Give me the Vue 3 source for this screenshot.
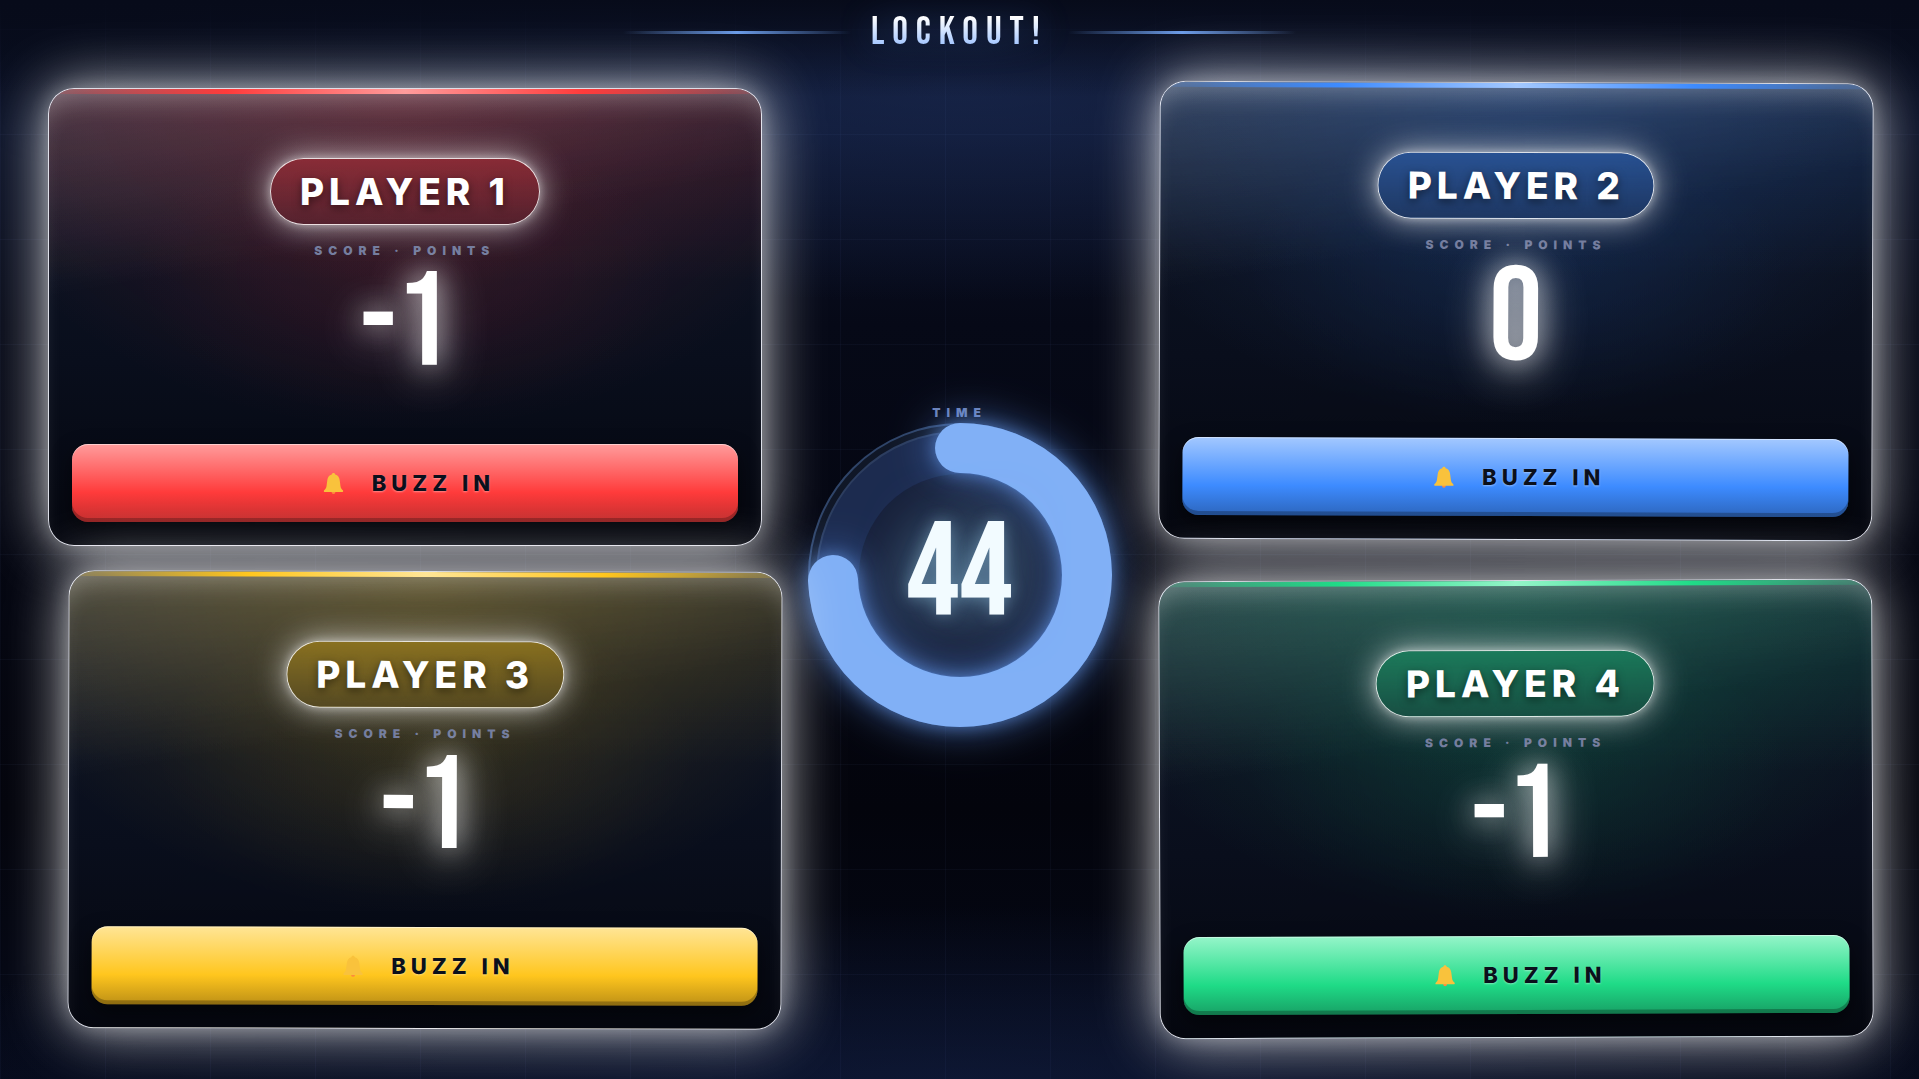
<template>
  <main class="game">
    <header class="game-header">
      <span class="title-line"></span>
      <h1 class="game-title">LOCKOUT!</h1>
      <span class="title-line"></span>
    </header>

    <div class="arena">
      <section
        v-for="player in players"
        :key="player.id"
        class="player-card"
        :class="`player-${player.id}`"
        :style="floatStyle(player)"
      >
        <div class="player-body">
          <h2 class="player-name">{{ player.name }}</h2>
          <span class="score-label">SCORE · POINTS</span>
          <span class="score-value">{{ player.score }}</span>
        </div>
        <button type="button" class="buzz-btn" @click="buzz(player)">
          <svg class="bell" viewBox="0 0 22 24" aria-hidden="true">
            <circle cx="11" cy="21" r="2" fill="#ff8a3c" />
            <path
              d="M11 1c-1 0-1.700.7-1.800 1.600C6.300 3.300 4.900 5.600 4.500 8.600l-.8 6C3.400 16.900 2.500 18.100 1.200 19.200c-.5.500-.5 1.800.3 1.800h19c.8 0 .8-1.300.3-1.800-1.300-1.100-2.200-2.300-2.500-4.600l-.8-6c-.4-3-1.800-5.300-4.700-6C12.700 1.700 12 1 11 1z"
              fill="#f9c23c"
            />
          </svg>
          BUZZ IN
        </button>
      </section>

      <div class="timer">
        <span class="timer-label">TIME</span>
        <div class="timer-dial">
          <svg class="timer-ring" viewBox="0 0 304 304" aria-hidden="true">
            <circle class="ring-rim" cx="152" cy="152" r="151" />
            <circle class="ring-track" cx="152" cy="152" r="143" />
            <circle class="ring-core" cx="152" cy="152" r="101" />
            <circle
              class="ring-progress"
              cx="152"
              cy="152"
              :r="radius"
              :stroke-dasharray="circumference"
              :stroke-dashoffset="dashOffset"
              transform="rotate(-90 152 152)"
            />
          </svg>
          <span class="timer-value">{{ Math.floor(timeLeft) }}</span>
        </div>
      </div>
    </div>
  </main>
</template>

<script setup>
import { computed, ref } from 'vue';

const ROUND_SECONDS = 60;

const players = ref([
  { id: 1, name: 'PLAYER 1', score: -1, x: 2, y: 3, tilt: 0 },
  { id: 2, name: 'PLAYER 2', score: 0, x: 0, y: -3, tilt: 0.2 },
  { id: 3, name: 'PLAYER 3', score: -1, x: 22, y: -4, tilt: 0.15 },
  { id: 4, name: 'PLAYER 4', score: -1, x: 0, y: 5, tilt: -0.2 }
]);

const timeLeft = ref(44.6);
const lockedBy = ref(null);

const radius = 127;
const circumference = 2 * Math.PI * radius;

const dashOffset = computed(() => {
  return circumference * (1 - timeLeft.value / ROUND_SECONDS);
});

const floatStyle = (player) => ({
  transform: `translate(${player.x}px, ${player.y}px) rotate(${player.tilt}deg)`
});

const buzz = (player) => {
  if (lockedBy.value === null) {
    lockedBy.value = player.id;
  }
};
</script>

<style>
body {
  margin: 0;
  background: #04060f;
}
</style>

<style scoped>
.game {
  box-sizing: border-box;
  display: flex;
  flex-direction: column;
  min-height: 100vh;
  padding: 0 46px 46px;
  overflow: hidden;
  font-family: Inter, "Liberation Sans", sans-serif;
  color: #fff;
  background:
    linear-gradient(#070b1a, transparent 9%),
    linear-gradient(90deg, rgba(130, 160, 255, 0.04) 1px, transparent 1px) 0 0 / 105px 105px,
    linear-gradient(rgba(130, 160, 255, 0.04) 1px, transparent 1px) 0 29px / 105px 105px,
    radial-gradient(ellipse 45% 20% at 50% 8%, rgba(34, 54, 104, 0.5), transparent),
    radial-gradient(ellipse 60% 16% at 50% 100%, rgba(24, 40, 84, 0.45), transparent),
    linear-gradient(#070b1a, #0b1228 12%, #060917 30%, #03040c 75%, #050918);
}

.game-header {
  display: flex;
  align-items: center;
  justify-content: center;
  gap: 20px;
  height: 64px;
  margin-bottom: 21px;
}

.title-line {
  width: 228px;
  height: 3px;
  background: linear-gradient(90deg, transparent, #6a9be8, transparent);
}

.game-title {
  margin: 0;
  padding-top: 2px;
  font-family: "Bebas Neue", "Liberation Sans Narrow", "DejaVu Sans Condensed", sans-serif;
  font-size: 39px;
  font-weight: 400;
  line-height: 48px;
  letter-spacing: 8px;
  color: transparent;
  background: linear-gradient(#ffffff 20%, #8db8ff 90%);
  background-clip: text;
  filter: drop-shadow(0 0 16px rgba(90, 150, 255, 0.35));
}

.arena {
  flex: 1;
  display: grid;
  grid-template-columns: 25fr 14fr 25fr;
  grid-template-rows: 1fr 1fr;
  row-gap: 32px;
}

.player-card {
  --accent: #ff3b3b;
  --accent-light: #ff9c9c;
  --accent-dark: #c22d2d;
  --tint: 255, 59, 66;
  position: relative;
  box-sizing: border-box;
  display: flex;
  flex-direction: column;
  gap: 8px;
  padding: 23px;
  border: 1px solid rgba(244, 246, 255, 0.9);
  border-radius: 26px;
  overflow: hidden;
  background:
    linear-gradient(170deg, rgba(255, 255, 255, 0.13), transparent 36%),
    radial-gradient(ellipse 65% 75% at 50% 0%, rgba(var(--tint), 0.18), transparent),
    linear-gradient(rgba(var(--tint), 0.14), transparent 42%),
    radial-gradient(ellipse 38% 32% at 50% 40%, rgba(var(--tint), 0.08), transparent),
    linear-gradient(#101728, #090e1c 60%, #05070f);
  box-shadow:
    0 0 20px rgba(255, 255, 255, 0.25),
    0 0 60px rgba(255, 255, 255, 0.75);
}

.player-card::before {
  content: "";
  position: absolute;
  inset: 0;
  border-radius: 25px;
  box-shadow: inset 0 24px 28px -16px rgba(255, 255, 255, 0.32);
}

.player-card::after {
  content: "";
  position: absolute;
  inset: 0 0 auto;
  height: 5px;
  background: linear-gradient(90deg, rgba(var(--tint), 0.1), var(--accent) 25%, var(--accent-light) 50%, var(--accent) 75%, rgba(var(--tint), 0.1));
}

.player-1,
.player-3 {
  grid-column: 1;
}

.player-2,
.player-4 {
  grid-column: 3;
}

.player-1,
.player-2 {
  grid-row: 1;
}

.player-3,
.player-4 {
  grid-row: 2;
}

.player-2 {
  --accent: #3d8bff;
  --accent-light: #a3c8ff;
  --accent-dark: #2d66bd;
  --tint: 56, 136, 255;
}

.player-3 {
  --accent: #ffc61e;
  --accent-light: #ffe596;
  --accent-dark: #bd9016;
  --tint: 255, 200, 20;
}

.player-4 {
  --accent: #1fdb87;
  --accent-light: #95f5c9;
  --accent-dark: #18a065;
  --tint: 30, 220, 140;
}

.player-body {
  flex: 1;
  display: flex;
  flex-direction: column;
  align-items: center;
  justify-content: center;
}

.player-name {
  box-sizing: border-box;
  margin: 0 0 18px;
  padding: 10px 29px;
  border: 1px solid rgba(255, 255, 255, 0.85);
  border-radius: 40px;
  font-size: 37px;
  font-weight: 800;
  line-height: 45px;
  letter-spacing: 5px;
  text-shadow: 0 3px 8px rgba(0, 0, 0, 0.5);
  background:
    linear-gradient(rgba(var(--tint), 0.44), rgba(var(--tint), 0.22)),
    rgba(24, 26, 40, 0.6);
  box-shadow:
    0 0 8px rgba(255, 255, 255, 0.4),
    0 0 32px rgba(255, 255, 255, 0.7);
}

.score-label,
.timer-label {
  font-size: 12px;
  font-weight: 900;
  line-height: 16px;
  letter-spacing: 6px;
  color: #757e9f;
}

.score-value,
.timer-value {
  font-family: "Bebas Neue", "Liberation Sans Narrow", "DejaVu Sans Condensed", sans-serif;
  font-size: 133px;
  font-weight: 400;
  line-height: 132px;
}

.score-value {
  text-shadow:
    0 0 28px rgba(255, 255, 255, 0.65),
    0 8px 48px rgba(255, 255, 255, 0.65);
}

.buzz-btn {
  display: flex;
  align-items: center;
  justify-content: center;
  gap: 28px;
  height: 78px;
  padding: 0 16px 0 24px;
  border: none;
  border-radius: 16px;
  font-family: inherit;
  font-size: 22px;
  font-weight: 800;
  letter-spacing: 5px;
  color: #0b101c;
  text-shadow: 0 1px 2px rgba(255, 255, 255, 0.4);
  cursor: pointer;
  background: linear-gradient(var(--accent-light), var(--accent) 62%, var(--accent-dark));
  box-shadow:
    inset 0 1px 0 rgba(255, 255, 255, 0.5),
    inset 0 -4px 0 rgba(0, 0, 0, 0.25),
    0 8px 20px rgba(0, 0, 0, 0.5);
}

.bell {
  width: 21px;
  height: 23px;
}

.timer {
  grid-column: 2;
  grid-row: 1 / 3;
  display: flex;
  flex-direction: column;
  align-items: center;
  justify-content: center;
  gap: 2px;
  padding-top: 14px;
}

.timer-label {
  color: #6c82b8;
}

.timer-dial {
  display: grid;
  place-items: center;
}

.timer-ring,
.timer-value {
  grid-area: 1 / 1;
}

.timer-ring {
  width: 304px;
  height: 304px;
  overflow: visible;
}

.ring-rim {
  fill: #101727;
  stroke: #2f4468;
  stroke-width: 2;
}

.ring-track {
  fill: #1c2b4f;
  stroke: #2c3d5f;
  stroke-width: 2;
}

.ring-core {
  fill: #17203a;
}

.ring-progress {
  fill: none;
  stroke: #81b0f6;
  stroke-width: 50;
  stroke-linecap: round;
  filter: drop-shadow(0 0 8px rgba(110, 165, 255, 0.5)) drop-shadow(0 0 20px rgba(100, 155, 245, 0.6));
}

.timer-value {
  color: #f2fbff;
  text-shadow:
    0 0 16px rgba(160, 210, 240, 0.4),
    0 0 56px rgba(130, 190, 220, 0.8);
}
</style>
